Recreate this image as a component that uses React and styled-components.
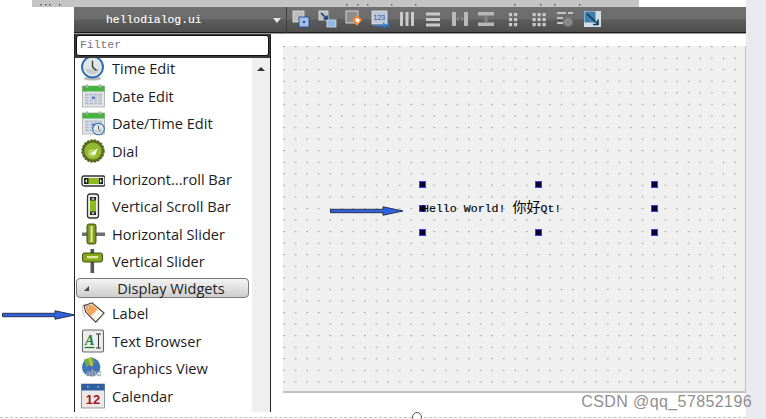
import React from 'react'
import styled, { createGlobalStyle } from 'styled-components'

const GlobalStyle = createGlobalStyle`
  html, body { margin: 0; padding: 0; background: #fff; }
  body { width: 766px; height: 419px; overflow: hidden; font-family: "Open Sans", sans-serif; }
`

const mono = '"Liberation Mono", "Noto Sans CJK SC", monospace'

/* ---------- list icons ---------- */

const Clock = ({ x = 12, y = 12, r = 10.5 }) => (
  <g>
    <circle cx={x} cy={y} r={r} fill="#dfe6e6" stroke="#2a6db5" strokeWidth={r / 5.5} />
    <path d={`M${x - r * .7} ${y + r * .2}A${r * .75} ${r * .75} 0 0 0 ${x + r * .7} ${y + r * .2}Z`} fill="#c5cdc8" />
    <path d={`M${x} ${y - r * 0.6}V${y}L${x + r * 0.38} ${y + r * 0.34}`} fill="none" stroke="#333" strokeWidth={r / 8} />
  </g>
)

const Calendar = ({ clock }) => (
  <g>
    <rect x="1.5" y="3" width="22" height="21" fill="#e4e6ea" stroke="#a0a0a0" strokeWidth=".7" />
    <rect x="1.5" y="3" width="22" height="5.5" fill="#47b23d" />
    <circle cx="6" cy="3" r="1.7" fill="#a8b4a4" />
    <circle cx="19" cy="3" r="1.7" fill="#a8b4a4" />
    <rect x="4" y="10.5" width="17" height="11" fill="#b8bfcb" />
    <path d="M4 13.2h17M4 16h17M4 18.8h17M8.2 10.5v11M12.5 10.5v11M16.8 10.5v11" stroke="#eef0f2" strokeWidth=".7" />
    <rect x="11" y="13.5" width="3" height="2.5" fill="#5c7cc8" />
    {clock && <Clock x={17.5} y={19} r={5.8} />}
  </g>
)

const icons = {
  time: (
    <svg width="24" height="26" viewBox="0 0 24 26">
      <ellipse cx="11.5" cy="23.5" rx="9" ry="2" fill="#bbb" />
      <Clock x={11.5} />
    </svg>
  ),
  date: <svg width="24" height="26" viewBox="0 0 24 26"><Calendar /></svg>,
  datetime: <svg width="24" height="26" viewBox="0 0 24 26"><Calendar clock /></svg>,
  dial: (
    <svg width="24" height="26" viewBox="0 0 24 26">
      <circle cx="12" cy="13" r="11" fill="#566e1e" strokeDasharray="2 1.5" stroke="#4f661c" strokeWidth="1.5" />
      <circle cx="12" cy="13" r="8.6" fill="#93b832" />
      <circle cx="11" cy="15" r="4" fill="#b6d05e" />
      <path d="M9 16l8-6-3 7z" fill="#f6f8e8" />
    </svg>
  ),
  hscroll: (
    <svg width="24" height="26" viewBox="0 0 24 26">
      <rect x="1" y="10" width="23" height="10" rx="2" fill="#f0f0ee" stroke="#333" strokeWidth="1.3" />
      <rect x="3" y="12" width="19" height="6" fill="#222" />
      <rect x="7.5" y="12" width="10.5" height="6" fill="#8dba1f" />
      <path d="M6 13v4l-2-2zM19 13v4l2-2z" fill="#eee" />
    </svg>
  ),
  vscroll: (
    <svg width="24" height="26" viewBox="0 0 24 26">
      <rect x="6.5" y="1" width="11" height="24" rx="2.5" fill="#f0f0ee" stroke="#333" strokeWidth="1.3" />
      <rect x="9" y="4" width="6" height="18" fill="#222" />
      <rect x="9" y="7.5" width="6" height="11" fill="#8dba1f" />
      <path d="M10 6.5h4l-2-2zM10 19.5h4l-2 2z" fill="#eee" />
    </svg>
  ),
  hslider: (
    <svg width="24" height="26" viewBox="0 0 24 26">
      <rect x="1" y="11.5" width="23" height="3.5" fill="#70706a" />
      <rect x="6" y="3" width="9" height="20" rx="2" fill="#7f9f1c" stroke="#34420e" strokeWidth=".9" />
      <rect x="9.5" y="5" width="2.2" height="16" fill="#dfe9a0" />
    </svg>
  ),
  vslider: (
    <svg width="24" height="26" viewBox="0 0 24 26">
      <rect x="9.5" y="1" width="3.6" height="24" fill="#56564f" />
      <rect x="1.5" y="5" width="20" height="9" rx="2" fill="#84a81c" stroke="#34420e" strokeWidth=".9" />
      <rect x="6" y="8" width="11" height="2.4" fill="#dfe9a0" />
    </svg>
  ),
  label: (
    <svg width="26" height="26" viewBox="0 0 26 26">
      <path d="M3 3.5C1 7 1 11 4 17" fill="none" stroke="#999" strokeWidth=".7" />
      <path d="M3.5 5L12 2l13 11-9 10L5 12z" fill="#fbf6ea" stroke="#3c3c3c" strokeWidth="1.2" />
      <path d="M5 5.8L11.6 3.4 18 9l-7.5 7.5L6 11.6z" fill="#f4a85c" />
      <circle cx="8" cy="7" r="1.4" fill="#fff" stroke="#555" strokeWidth=".5" />
    </svg>
  ),
  text: (
    <svg width="24" height="26" viewBox="0 0 24 26">
      <rect x="1.5" y="2" width="21" height="22" rx="1.5" fill="#ededed" stroke="#666" strokeWidth="1.1" />
      <text x="4" y="17" fontFamily="Liberation Serif, serif" fontStyle="italic" fontWeight="700" fontSize="14" fill="#1e7b34">A</text>
      <path d="M3.5 19.5h10" stroke="#1e7b34" strokeWidth="1.3" />
      <path d="M15 6h5M17.5 6v14M15 20h5" stroke="#333" strokeWidth="1" fill="none" />
    </svg>
  ),
  graphics: (
    <svg width="26" height="28" viewBox="0 0 26 28">
      <circle cx="11" cy="13" r="10" fill="#3f74b8" />
      <path d="M3 5l9-3 3 6-9 5z" fill="#6fb04a" />
      <path d="M9 3l3 9" stroke="#d6c23a" strokeWidth="2.4" />
      <text x="5" y="23" fontFamily="Liberation Sans, sans-serif" fontWeight="700" fontSize="10" fill="#c9d2de" stroke="#667" strokeWidth=".3">abc</text>
    </svg>
  ),
  calendar: (
    <svg width="26" height="28" viewBox="0 0 26 28">
      <rect x=".5" y="1" width="25" height="26" fill="#e9e9e9" stroke="#777" strokeWidth=".8" />
      <rect x=".5" y="1" width="25" height="7" fill="#2f5f9f" />
      <path d="M7 4h1M18 4h1" stroke="#fff" strokeWidth="1.5" />
      <text x="13" y="23" textAnchor="middle" fontFamily="Liberation Sans, sans-serif" fontWeight="700" fontSize="14" fill="#a81818">12</text>
    </svg>
  ),
  blank: (
    <svg width="26" height="26" viewBox="0 0 26 26">
      <rect x="1" y="1" width="24" height="24" fill="#999" />
    </svg>
  )
}

/* ---------- toolbar icons ---------- */

const Bars = ({ vertical }) => (
  <g fill="#c9c9c9">
    {[2, 7.5, 13].map(p =>
      vertical
        ? <rect key={p} x="2" y={p + .5} width="14" height="3" />
        : <rect key={p} x={p} y="2" width="3" height="14" />
    )}
  </g>
)

const Dots = ({ cols }) => (
  <g fill="#c9c9c9">
    {cols.flatMap(x => [3, 8, 13].map(y => <rect key={`${x}-${y}`} x={x} y={y} width="3.2" height="3.2" />))}
  </g>
)

const tools = [
  <g>
    <rect x="1" y="1" width="11" height="11" fill="#bdbdbd" stroke="#e4e4e4" strokeWidth=".8" />
    <rect x="7" y="7" width="10" height="10" fill="#9cc0e6" stroke="#20408a" strokeWidth=".8" />
    <rect x="11" y="11" width="2" height="2" fill="#20408a" />
  </g>,
  <g>
    <rect x="1" y="1" width="9" height="9" fill="#bdbdbd" stroke="#e4e4e4" strokeWidth=".8" />
    <rect x="9" y="10" width="9" height="7" fill="#8fb8e4" stroke="#cfe0f2" strokeWidth=".8" />
    <path d="M3 3l6 6M5.5 9H9V5.5" stroke="#123a80" strokeWidth="1.6" fill="none" />
  </g>,
  <g>
    <rect x="1" y="1" width="12" height="12" fill="#8c8c8c" stroke="#dedede" strokeWidth=".9" />
    <path d="M7 10l5-5 5 5-5 6z" fill="#f08a3a" />
    <path d="M10 10l2-2 3 2-2 3z" fill="#fff" />
  </g>,
  <g>
    <rect x="1" y="1" width="15" height="13" fill="#bcc6d4" stroke="#e8e8e8" strokeWidth=".8" />
    <text x="2.5" y="10" fontSize="7" fontFamily="Liberation Sans, sans-serif" fill="#2458a8">123</text>
    <path d="M3 15.5h11M12 13l3 2.5-3 2.5" stroke="#2f7fd8" strokeWidth="1.3" fill="none" />
    <path d="M17.5 12v6" stroke="#2f7fd8" strokeWidth="1" />
  </g>,
  <Bars />,
  <Bars vertical />,
  <g fill="#b8b8b8">
    <rect x="1" y="2" width="4" height="14" />
    <rect x="13" y="2" width="4" height="14" />
    <path d="M5 9l3-2.5v5zM13 9l-3-2.5v5z" fill="#8a8a8a" />
  </g>,
  <g fill="#b8b8b8">
    <rect x="1" y="2" width="16" height="3.5" />
    <rect x="1" y="12.5" width="16" height="3.5" />
    <path d="M9 5.5l-2.5 3h5zM9 12.5l-2.5-3h5z" fill="#8a8a8a" />
  </g>,
  <Dots cols={[5, 10]} />,
  <Dots cols={[2.5, 7.5, 12.5]} />,
  <g>
    <path d="M1 3h9M1 8h6M1 13h6M12 3h5" stroke="#c4c4c4" strokeWidth="2" />
    <circle cx="12" cy="12" r="5" fill="#7d7d7d" />
    <circle cx="12" cy="12" r="2.4" fill="none" stroke="#a2a2a2" />
  </g>,
  <g>
    <rect x="1" y="1" width="17" height="16" fill="#d5dde2" />
    <rect x="1.5" y="1.5" width="11" height="11" fill="#3f7fae" />
    <path d="M4 4l11 10M15 9.5V14.5H10" stroke="#0c3a5c" strokeWidth="1.6" fill="none" />
  </g>
]

/* ---------- data ---------- */

const firstItems = [
  ['time', 'Time Edit'],
  ['date', 'Date Edit'],
  ['datetime', 'Date/Time Edit'],
  ['dial', 'Dial'],
  ['hscroll', 'Horizont...roll Bar'],
  ['vscroll', 'Vertical Scroll Bar'],
  ['hslider', 'Horizontal Slider'],
  ['vslider', 'Vertical Slider']
]

const secondItems = [
  ['label', 'Label'],
  ['text', 'Text Browser'],
  ['graphics', 'Graphics View'],
  ['calendar', 'Calendar'],
  ['blank', '']
]

// bits of a cropped line of text that still show at the top edge
const cutMarks = [8, 13, 17, 27, 314, 325, 335, 359, 383, 482, 508, 522, 547]

const WidgetRow = ({ icon, name }) => (
  <Row>
    <RowIcon>{icons[icon]}</RowIcon>
    <span>{name}</span>
  </Row>
)

const Arrow = () => (
  <svg width="74" height="10" viewBox="0 0 74 10">
    <path d="M.5 3.3H53V.8L73 5 53 9.2V6.7H.5z" fill="#2f62e0" stroke="#28324e" strokeWidth="1" />
  </svg>
)

export default function App() {
  return (
    <Page>
      <GlobalStyle />
      <Main>
        <TopStrip>
          <svg width="607" height="2" viewBox="0 0 607 2">
            {cutMarks.map(x => <rect key={x} x={x} y="0" width="1.5" height="1.4" fill="#55555f" />)}
          </svg>
        </TopStrip>
        <Designer>
          <Toolbar>
            <FileBox>
              <FileName>hellodialog.ui</FileName>
              <Caret />
            </FileBox>
            <ToolIcons>
              {tools.map((tool, i) => (
                <svg key={i} width="19" height="18" viewBox="0 0 19 18">{tool}</svg>
              ))}
            </ToolIcons>
          </Toolbar>
          <Body>
            <Sidebar>
              <FilterBar>
                <FilterInput>Filter</FilterInput>
              </FilterBar>
              <ListArea>
                <List>
                  {firstItems.map(([icon, name]) => <WidgetRow key={name} icon={icon} name={name} />)}
                  <Group><GroupCaret />Display Widgets</Group>
                  {secondItems.map(([icon, name]) => <WidgetRow key={icon} icon={icon} name={name} />)}
                </List>
                <Scrollbar><ScrollUp /></Scrollbar>
              </ListArea>
            </Sidebar>
            <CanvasArea>
              <Canvas>
                <Selection>
                  <Handle $x={0} $y={0} /><Handle $x={50} $y={0} /><Handle $x={100} $y={0} />
                  <Handle $x={0} $y={50} /><Handle $x={100} $y={50} />
                  <Handle $x={0} $y={100} /><Handle $x={50} $y={100} /><Handle $x={100} $y={100} />
                  <HelloText>Hello World! <Cjk>你好</Cjk>Qt!</HelloText>
                  <CanvasArrow><Arrow /></CanvasArrow>
                </Selection>
              </Canvas>
            </CanvasArea>
          </Body>
        </Designer>
        <DashedLine><Knob /></DashedLine>
      </Main>
      <SideStrip />
      <ListArrow><Arrow /></ListArrow>
      <Watermark>CSDN @qq_57852196</Watermark>
    </Page>
  )
}

const Page = styled.div`
  position: relative;
  display: grid;
  grid-template-columns: 746px 20px;
  width: 766px;
  height: 419px;
  overflow: hidden;
  background: #fff;
`

const Main = styled.div`
  display: flex;
  flex-direction: column;
`

const SideStrip = styled.div`
  background: #e9e9ef;
`

const TopStrip = styled.div`
  flex: none;
  width: 607px;
  height: 7px;
  margin-left: 32px;
  background: #c4c4c4;
  line-height: 0;
`

const Designer = styled.div`
  flex: none;
  display: flex;
  flex-direction: column;
  height: 405px;
  margin-left: 74px;
`

const Toolbar = styled.div`
  flex: none;
  display: flex;
  height: 27px;
  box-sizing: border-box;
  border-bottom: 1px solid #9a9a9a;
  background: linear-gradient(#707070 0, #6c6c6c 45%, #5c5c5c 50%, #4e4e4e 96%, #1e1e1e 96%);
`

const FileBox = styled.div`
  flex: none;
  display: flex;
  align-items: center;
  justify-content: space-between;
  box-sizing: border-box;
  width: 213px;
  padding: 0 5px 0 32px;
  border-right: 1px solid #3e3e3e;
`

const FileName = styled.span`
  font: 11.4px ${mono};
  color: #fff;
  -webkit-text-stroke: 0.15px #fff;
`

const Caret = styled.span`
  width: 0;
  height: 0;
  border-left: 4px solid transparent;
  border-right: 4px solid transparent;
  border-top: 5px solid #e8e8e8;
`

const ToolIcons = styled.div`
  display: flex;
  align-items: center;
  gap: 7.45px;
  padding: 0 0 3px 5px;
`

const Body = styled.div`
  flex: 1;
  display: flex;
  min-height: 0;
`

const Sidebar = styled.div`
  flex: none;
  display: flex;
  flex-direction: column;
  box-sizing: border-box;
  width: 197px;
  border-left: 1px solid #222;
  border-right: 1px solid #222;
  background: #fff;
`

const FilterBar = styled.div`
  flex: none;
  height: 24px;
  box-sizing: border-box;
  padding: 1px 1px 2px 1px;
  background: #3a3a3a;
`

const FilterInput = styled.div`
  height: 100%;
  box-sizing: border-box;
  padding-left: 3px;
  border: 1px solid #111;
  border-radius: 3px;
  background: #fff;
  font: 11.4px/19px ${mono};
  color: #777;
`

const ListArea = styled.div`
  flex: 1;
  display: flex;
  min-height: 0;
  overflow: hidden;
`

const List = styled.div`
  flex: 1;
  min-width: 0;
  margin-top: -3.5px;
`

const Row = styled.div`
  display: flex;
  align-items: center;
  gap: 7px;
  height: 27.6px;
  padding-left: 6px;
  font-size: 14.6px;
  color: #1c1c24;
  white-space: nowrap;
`

const RowIcon = styled.span`
  flex: none;
  display: flex;
  justify-content: center;
  width: 24px;
`

const Group = styled.div`
  position: relative;
  display: flex;
  align-items: center;
  justify-content: center;
  height: 20px;
  box-sizing: border-box;
  margin: 2.5px 3px 1.5px 1px;
  padding-left: 17px;
  border: 1px solid #7a7a7a;
  border-radius: 4px;
  background: linear-gradient(#f4f4f4, #cdcdcd);
  font-size: 14.6px;
  color: #1c1c24;
`

const GroupCaret = styled.span`
  position: absolute;
  left: 7px;
  top: 7px;
  border-left: 5px solid transparent;
  border-bottom: 5px solid #444;
`

const Scrollbar = styled.div`
  flex: none;
  display: flex;
  justify-content: center;
  width: 18px;
  padding-top: 9px;
  box-sizing: border-box;
  background: #efefef;
`

const ScrollUp = styled.span`
  width: 0;
  height: 0;
  border-left: 4px solid transparent;
  border-right: 4px solid transparent;
  border-bottom: 4px solid #333;
`

const CanvasArea = styled.div`
  flex: 1;
  box-sizing: border-box;
  padding: 12px 0 19px 12px;
  background: #fff;
`

const Canvas = styled.div`
  height: 100%;
  box-sizing: border-box;
  padding: 138px 0 0 139px;
  border-right: 1px solid #c0c0c0;
  border-bottom: 2px solid #c0c0c0;
  background-color: #f0f0f0;
  background-image: radial-gradient(circle at 1px 0.7px, #acacac 0.5px, transparent 1px);
  background-size: 11.57px 11.57px;
`

const Selection = styled.div`
  position: relative;
  width: 232px;
  height: 48px;
`

const Handle = styled.span`
  position: absolute;
  left: ${p => p.$x}%;
  top: ${p => p.$y}%;
  width: 5px;
  height: 5px;
  margin: -3px 0 0 -3px;
  border: 1px solid #3c3cff;
  background: #000030;
`

const HelloText = styled.div`
  position: absolute;
  left: 0;
  top: 13px;
  font: 11.6px/18px ${mono};
  color: #000;
  -webkit-text-stroke: 0.15px #000;
  white-space: nowrap;
`

const Cjk = styled.span`
  font: 14px/18px "Noto Sans CJK SC", sans-serif;
  -webkit-text-stroke: 0;
`

const CanvasArrow = styled.div`
  position: absolute;
  left: -92px;
  top: 22px;
  line-height: 0;
`

const ListArrow = styled.div`
  position: absolute;
  left: 2px;
  top: 310px;
  line-height: 0;
`

const DashedLine = styled.div`
  position: relative;
  flex: none;
  height: 1px;
  margin-top: 5px;
  border-top: 1px dashed #c4c4c4;
`

const Knob = styled.span`
  position: absolute;
  left: 412px;
  top: -6px;
  width: 10px;
  height: 10px;
  box-sizing: border-box;
  border: 1px solid #555;
  border-radius: 50%;
  background: #fff;
`

const Watermark = styled.div`
  position: absolute;
  right: 14px;
  top: 393px;
  font: 16px/18px "Liberation Sans", sans-serif;
  letter-spacing: 0.4px;
  color: #8f8f8f;
`
